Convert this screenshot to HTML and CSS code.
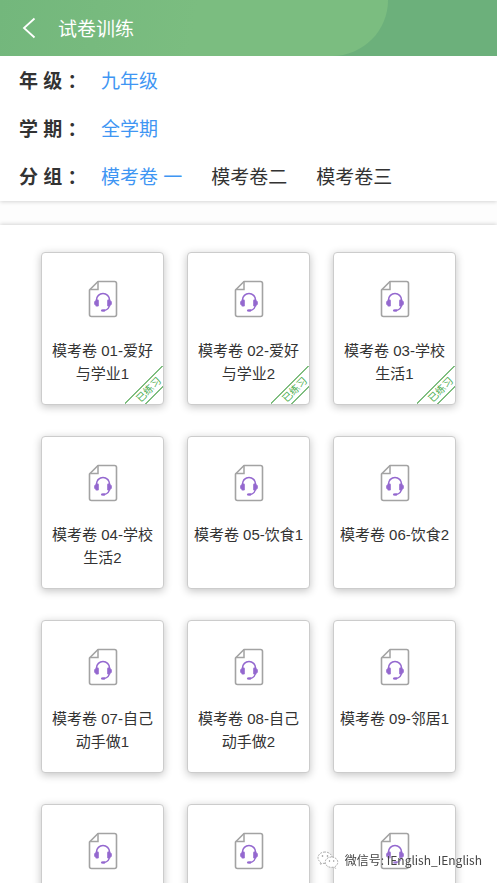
FILE: index.html
```html
<!DOCTYPE html>
<html lang="zh-CN">
<head>
<meta charset="utf-8">
<meta name="viewport" content="width=device-width, initial-scale=1">
<title>试卷训练</title>
<link rel="stylesheet" href="styles.css">
</head>
<body>
<svg class="sprite" aria-hidden="true">
  <symbol id="paper" viewBox="0 0 30 38">
    <path d="M10 1.5H26.500a2 2 0 0 1 2 2V34.500a2 2 0 0 1-2 2H3.500a2 2 0 0 1-2-2V10Z" fill="#fff" stroke="#a3a3a3" stroke-width="1.600" stroke-linejoin="round"/>
    <path d="M10 1.500V9.500H1.800" fill="none" stroke="#a3a3a3" stroke-width="1.500"/>
    <path d="M8.500 21.500V20a6.500 6.500 0 0 1 13 0V21.500" fill="none" stroke="#9468cf" stroke-width="1.500"/>
    <path d="M21.500 24c0 4-2.500 6-5.500 6.500" fill="none" stroke="#9468cf" stroke-width="1.300"/>
    <rect x="7.400" y="19.500" width="3.400" height="7" rx="1.200" fill="#9468cf"/>
    <rect x="19.200" y="19.500" width="3.400" height="7" rx="1.200" fill="#9468cf"/>
    <rect x="6.200" y="21" width="2" height="4" rx="1" fill="#9468cf"/>
    <rect x="21.800" y="21" width="2" height="4" rx="1" fill="#9468cf"/>
    <ellipse cx="15.200" cy="30.500" rx="2.300" ry="1.300" fill="#9468cf"/>
  </symbol>
</svg>
<header class="topbar">
  <button class="back" type="button" aria-label="返回">
    <svg viewBox="0 0 14 22" aria-hidden="true"><path d="M12.500 1.500 2 11l10.500 9.500" fill="none" stroke="#fff" stroke-width="1.800"/></svg>
  </button>
  <h1 class="title">试卷训练</h1>
</header>
<section class="filters">
  <div class="filter"><span class="label">年 级 ：</span><button class="option active" type="button">九年级</button></div>
  <div class="filter"><span class="label">学 期 ：</span><button class="option active" type="button">全学期</button></div>
  <div class="filter"><span class="label">分 组 ：</span><button class="option active" type="button">模考卷 一</button><button class="option" type="button">模考卷二</button><button class="option" type="button">模考卷三</button></div>
</section>
<main class="papers">
  <a class="card" href="#"><svg class="icon"><use href="#paper"/></svg><span class="name">模考卷 01-爱好与学业1</span><span class="ribbon"><span class="band">已练习</span></span></a>
  <a class="card" href="#"><svg class="icon"><use href="#paper"/></svg><span class="name">模考卷 02-爱好与学业2</span><span class="ribbon"><span class="band">已练习</span></span></a>
  <a class="card" href="#"><svg class="icon"><use href="#paper"/></svg><span class="name">模考卷 03-学校生活1</span><span class="ribbon"><span class="band">已练习</span></span></a>
  <a class="card" href="#"><svg class="icon"><use href="#paper"/></svg><span class="name">模考卷 04-学校生活2</span></a>
  <a class="card" href="#"><svg class="icon"><use href="#paper"/></svg><span class="name">模考卷 05-饮食1</span></a>
  <a class="card" href="#"><svg class="icon"><use href="#paper"/></svg><span class="name">模考卷 06-饮食2</span></a>
  <a class="card" href="#"><svg class="icon"><use href="#paper"/></svg><span class="name">模考卷 07-自己动手做1</span></a>
  <a class="card" href="#"><svg class="icon"><use href="#paper"/></svg><span class="name">模考卷 08-自己动手做2</span></a>
  <a class="card" href="#"><svg class="icon"><use href="#paper"/></svg><span class="name">模考卷 09-邻居1</span></a>
  <a class="card" href="#" aria-label="模考卷 10"><svg class="icon"><use href="#paper"/></svg></a>
  <a class="card" href="#" aria-label="模考卷 11"><svg class="icon"><use href="#paper"/></svg></a>
  <a class="card" href="#" aria-label="模考卷 12"><svg class="icon"><use href="#paper"/></svg></a>
</main>
<div class="watermark">
  <svg viewBox="0 0 22 18" aria-hidden="true">
    <g fill="#fff" stroke="#999" stroke-width="0.800" stroke-dasharray="2 1">
      <path d="M8 1C4 1 1 3.500 1 6.800c0 1.900 1 3.400 2.600 4.500L3 13.500l2.500-1.300c.8.2 1.600.3 2.500.3 4 0 7-2.500 7-5.700S12 1 8 1Z"/>
      <path d="M14.500 6c-3.600 0-6.300 2.300-6.300 5.200s2.700 5.200 6.300 5.200c.7 0 1.400-.1 2-.3l2.200 1.200-.5-1.900c1.600-1 2.600-2.500 2.600-4.200C20.800 8.300 18 6 14.500 6Z"/>
    </g>
    <g fill="#888"><circle cx="5.500" cy="5" r=".8"/><circle cx="10.500" cy="5" r=".8"/><circle cx="12.500" cy="10" r=".7"/><circle cx="16.700" cy="10" r=".7"/></g>
  </svg>
  <span>微信号: IEnglish_IEnglish</span>
</div>
</body>
</html>
```
FILE: styles.css
```css
* { box-sizing: border-box; }

body {
  margin: 0;
  height: 100vh;
  display: flex;
  flex-direction: column;
  background: #fdfdfd;
  color: #333;
  font-family: "Liberation Sans", "Noto Sans CJK SC", sans-serif;
  font-size: 15px;
}

button {
  padding: 0;
  border: 0;
  background: none;
  color: inherit;
  font: inherit;
  cursor: pointer;
}

.sprite { position: absolute; width: 0; height: 0; }

.topbar {
  position: relative;
  flex: none;
  display: flex;
  align-items: center;
  gap: 22px;
  height: 56px;
  padding: 0 22px;
  background: #6cb07b;
  color: #fff;
}

.topbar::before {
  content: "";
  position: absolute;
  inset: 0 22% 0 0;
  border-bottom-right-radius: 56px;
  background: linear-gradient(100deg, #73b77c, #7bbd80 50%);
}

.back { position: relative; width: 14px; height: 22px; }
.back svg { display: block; width: 14px; height: 22px; }

.title {
  position: relative;
  margin: 0;
  padding-bottom: 2px;
  font-size: 19px;
  font-weight: 400;
}

.filters {
  position: relative;
  flex: none;
  padding-left: 19px;
  background: #fff;
  box-shadow: 0 1px 4px rgba(0, 0, 0, 0.16);
  clip-path: inset(0 0 -8px 0);
}

.filter {
  display: flex;
  align-items: center;
  gap: 29px;
  height: 48px;
  padding-bottom: 2px;
  font-size: 19px;
}

.filter:last-child { margin-bottom: 1px; }

.label {
  flex: none;
  width: 53px;
  font-weight: 700;
  white-space: nowrap;
}

.option { white-space: nowrap; }
.active { color: #3f96f3; }

.papers {
  flex: 1;
  min-height: 0;
  margin-top: 24px;
  padding: 27px 41px;
  display: grid;
  grid-template-columns: repeat(3, 1fr);
  grid-auto-rows: 153px;
  gap: 31px 23px;
  overflow-y: auto;
  scrollbar-width: none;
  background: #fff;
  box-shadow: 0 -1px 4px rgba(0, 0, 0, 0.16);
}

.card {
  position: relative;
  display: flex;
  flex-direction: column;
  align-items: center;
  gap: 21px;
  padding: 27px 4px 0;
  border: 1px solid #ccc;
  border-radius: 4px;
  background: #fff;
  box-shadow: 0 2px 8px rgba(0, 0, 0, 0.24);
  color: #333;
  text-align: center;
  text-decoration: none;
}

.icon { flex: none; width: 30px; height: 38px; }

.name { line-height: 23px; }

.ribbon {
  position: absolute;
  right: 0;
  bottom: 0;
  display: flex;
  align-items: center;
  justify-content: center;
  width: 38px;
  height: 38px;
  padding: 10px 0 0 10px;
  background: linear-gradient(135deg,
    transparent 26px, #7fbe80 26px, #7fbe80 27px, transparent 27px,
    transparent 41px, #7fbe80 41px, #7fbe80 42px, transparent 42px);
}

.band {
  flex: none;
  color: #4cae50;
  font-size: 10px;
  line-height: 12px;
  white-space: nowrap;
  transform: rotate(-45deg);
}

.watermark {
  position: fixed;
  right: 15px;
  bottom: 13px;
  display: flex;
  align-items: center;
  gap: 6px;
  color: #444;
  font-family: "Noto Sans CJK SC", sans-serif;
  font-size: 12px;
  line-height: 20px;
  text-shadow: 0 0 2px #fff;
}

.watermark svg { width: 22px; height: 18px; }
```
